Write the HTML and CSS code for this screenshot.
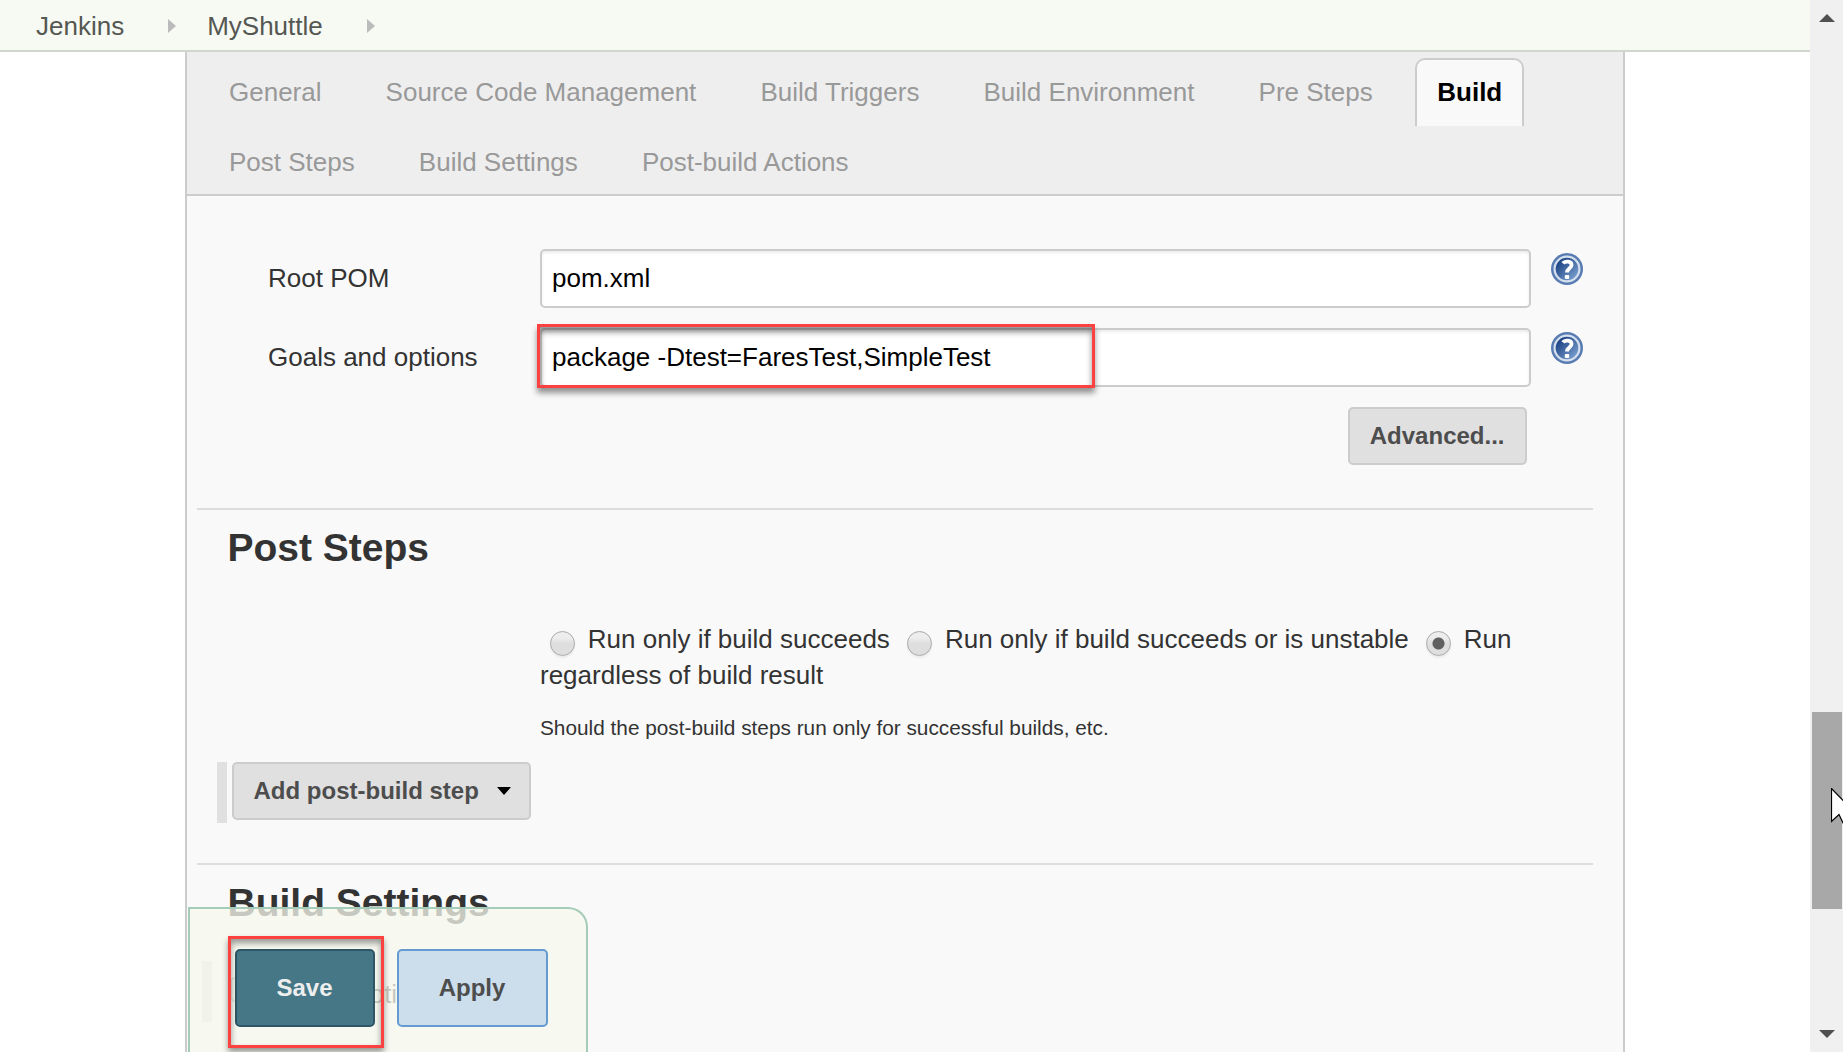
FILE: index.html
```html
<!DOCTYPE html>
<html lang="en">
<head>
<meta charset="utf-8">
<title>MyShuttle Config [Jenkins]</title>
<link rel="stylesheet" href="styles.css">
</head>
<body>
<svg class="defs" width="0" height="0">
  <defs>
    <linearGradient id="helpFill" x1="0" y1="0" x2="1" y2="1">
      <stop offset="0.1" stop-color="#12397b"/>
      <stop offset="0.9" stop-color="#7ea3d3"/>
    </linearGradient>
    <symbol id="help" viewBox="0 0 32 32">
      <circle cx="16" cy="16" r="16" fill="#587cb2"/>
      <circle cx="16" cy="16" r="12.4" fill="url(#helpFill)" stroke="#d5e0ef" stroke-width="2.2"/>
      <path d="M12 10.4C13.6 8 20.6 7.400 20.6 12C20.6 15.400 16 15 16 19.6" fill="none" stroke="#fff" stroke-width="3.8"/>
      <rect x="13.800" y="22" width="4.400" height="4" rx="1" fill="#fff"/>
    </symbol>
  </defs>
</svg>
<div class="page">
  <div class="content">
    <nav class="breadcrumbs">
      <span class="crumb">Jenkins</span>
      <svg class="crumb-arrow" viewBox="0 0 8 14"><path d="M0 0L8 7L0 14Z"/></svg>
      <span class="crumb">MyShuttle</span>
      <svg class="crumb-arrow" viewBox="0 0 8 14"><path d="M0 0L8 7L0 14Z"/></svg>
    </nav>
    <main class="panel">
      <div class="tabs">
        <span class="tab">General</span>
        <span class="tab">Source Code Management</span>
        <span class="tab">Build Triggers</span>
        <span class="tab">Build Environment</span>
        <span class="tab">Pre Steps</span>
        <span class="tab tab-active">Build</span>
        <span class="tab">Post Steps</span>
        <span class="tab">Build Settings</span>
        <span class="tab">Post-build Actions</span>
      </div>
      <section class="section build">
        <div class="row">
          <span class="label">Root POM</span>
          <div class="field">pom.xml</div>
          <svg class="help"><use href="#help"/></svg>
        </div>
        <div class="row">
          <span class="label">Goals and options</span>
          <div class="field">package -Dtest=FaresTest,SimpleTest<span class="mark mark-goals"></span></div>
          <svg class="help"><use href="#help"/></svg>
        </div>
        <div class="actions"><span class="button">Advanced...</span></div>
      </section>
      <section class="section post-steps">
        <h2 class="heading">Post Steps</h2>
        <div class="options">
          <p class="radios"><i class="radio"></i>Run only if build succeeds <i class="radio"></i>Run only if build succeeds or is unstable <i class="radio radio-on"></i>Run<br>regardless of build result</p>
          <p class="hint">Should the post-build steps run only for successful builds, etc.</p>
        </div>
        <div class="adder">
          <i class="bar"></i>
          <span class="button">Add post-build step<svg class="caret" viewBox="0 0 14 8"><path d="M0 0H14L7 8Z"/></svg></span>
        </div>
      </section>
      <section class="section settings">
        <h2 class="heading">Build Settings</h2>
        <div class="email">
          <i class="bar"></i>
          <i class="checkbox"></i>
          <span>E-mail Notification</span>
        </div>
      </section>
      <div class="footer">
        <span class="big-button save">Save<span class="mark mark-save"></span></span>
        <span class="big-button apply">Apply</span>
      </div>
    </main>
  </div>
  <aside class="scrollbar">
    <svg class="scroll-arrow" viewBox="0 0 16 8"><path d="M8 0L16 8H0Z"/></svg>
    <div class="thumb"></div>
    <svg class="scroll-arrow" viewBox="0 0 16 8"><path d="M0 0H16L8 8Z"/></svg>
  </aside>
  <svg class="cursor" viewBox="0 0 24 38"><path d="M.5.5V33.5L8 26.5L13 37L18 35L13.500 25H24Z" fill="#fff" stroke="#000" stroke-width="1.2"/></svg>
</div>
</body>
</html>
```

FILE: styles.css
```css
* { box-sizing: border-box; }
body {
  margin: 0;
  overflow: hidden;
  background: #fff;
  color: #333;
  font: 26px/36px "Liberation Sans", Arial, sans-serif;
}
.defs { position: absolute; }
.page { position: relative; display: flex; width: 1843px; height: 1052px; overflow: hidden; }
.content { display: flex; flex-direction: column; width: 1810px; }

.breadcrumbs {
  display: flex;
  align-items: center;
  height: 52px;
  flex: none;
  padding: 2px 0 0 36px;
  background: #f6faf2;
  border-bottom: 2px solid #d3d6cf;
  color: #555753;
}
.crumb-arrow { width: 8px; height: 14px; margin: 0 31px 0 44px; fill: #bbb; }

.panel {
  position: relative;
  flex: 1;
  width: 1440px;
  margin-left: 185px;
  background: #f9f9f9;
  border: solid #ccc;
  border-width: 0 2px;
}
.tabs {
  display: flex;
  flex-wrap: wrap;
  align-content: flex-start;
  gap: 2px 20.1px;
  height: 144px;
  padding: 6px 20px 0;
  background: #eee;
  border-bottom: 2px solid #ccc;
  color: #999;
}
.tab { height: 68px; padding: 0 22px; line-height: 69px; }
.tab-active {
  margin-left: 0.4px;
  padding: 0 20px;
  line-height: 65px;
  background: #f9f9f9;
  border: 2px solid #ccc;
  border-bottom: 0;
  border-radius: 10px 10px 0 0;
  color: #000;
  font-weight: bold;
}

.section { margin: 0 30px 0 10px; }
.build { height: 312px; padding-top: 53px; }
.row { display: flex; height: 79px; }
.label { width: 272px; margin-left: 71px; line-height: 58px; }
.field {
  position: relative;
  width: 991px;
  height: 59px;
  padding-left: 10px;
  background: #fff;
  border: 2px solid #ccc;
  border-radius: 5px;
  box-shadow: inset 0 2px 3px rgba(0, 0, 0, .08);
  color: #000;
  line-height: 54px;
}
.help { width: 32px; height: 32px; margin: 4px 0 0 20px; }
.mark { position: absolute; border: 3px solid #fd4141; }
.mark-goals {
  left: -5px;
  top: -6px;
  width: 558px;
  height: 64px;
  box-shadow: 0 5px 6px rgba(0, 0, 0, .42), inset 0 5px 6px rgba(0, 0, 0, .42);
}
.actions { display: flex; justify-content: flex-end; padding-right: 66px; }
.button {
  display: flex;
  height: 58px;
  padding: 0 20.5px 0 19.5px;
  background: #e0e0e0;
  border: 2px solid #ccc;
  border-radius: 5px;
  color: #4d4d4d;
  font-size: 24px;
  font-weight: bold;
  line-height: 54px;
}

.post-steps { height: 355px; border-top: 2px solid #ddd; }
.heading { margin: 0 0 0 30.5px; padding-top: 14px; font-size: 39px; line-height: 48px; color: #333; }
.options { margin-left: 343px; padding-top: 49px; }
.radios { margin: 0; white-space: nowrap; }
.radio {
  display: inline-block;
  width: 25px;
  height: 25px;
  margin: 0 12.8px 0 10px;
  border: 1.5px solid #aaa;
  border-radius: 50%;
  background: linear-gradient(#ededed 25%, #dedede 50%);
  box-shadow: 0 2px 2px rgba(0, 0, 0, .06);
  vertical-align: -8px;
}
.radio-on { background: radial-gradient(circle, #606060 5.500px, transparent 6.500px), linear-gradient(#ededed 25%, #dedede 50%); }
.hint { margin: 17px 0 0; font-size: 20.800px; line-height: 36px; }
.adder { display: flex; gap: 5px; margin: 16px 0 0 20px; }
.adder .button { padding-right: 18px; }
.bar { width: 10px; height: 61px; background: #e0e0e0; }
.caret { width: 14px; height: 8px; margin: 23px 0 0 18.5px; fill: #000; }

.settings { border-top: 2px solid #ddd; }
.email { display: flex; margin: 34px 0 0 5px; line-height: 66px; }
.checkbox {
  width: 25px;
  height: 25px;
  margin: 16px 15px 0 18px;
  border: 2px solid #aaa;
  border-radius: 5px;
  background: #e6e6e6;
}

.footer {
  position: absolute;
  left: 1px;
  bottom: 0;
  display: flex;
  gap: 22px;
  width: 400px;
  height: 145px;
  padding: 40px 0 0 45px;
  background: rgba(246, 248, 236, .76);
  border: solid #a5ccb8;
  border-width: 2px 2px 0;
  border-radius: 0 20px 0 0;
}
.big-button {
  position: relative;
  height: 78px;
  border: 2px solid;
  border-radius: 5px;
  font-size: 24px;
  font-weight: bold;
  line-height: 74px;
  text-align: center;
}
.save { width: 140px; padding-right: 1px; background: #457786; border-color: #2f5666; color: #eee; }
.apply { width: 151px; padding-right: 1px; background: #ccddec; border-color: #659bd1; color: #4d4d4d; }
.mark-save {
  left: -9px;
  top: -15px;
  width: 156px;
  height: 112px;
  box-shadow: 0 4px 6px rgba(0, 0, 0, .4), inset 0 4px 6px rgba(0, 0, 0, .4);
}

.scrollbar {
  display: flex;
  flex-direction: column;
  align-items: center;
  width: 33px;
  padding: 14px 0;
  background: #f0f0f0;
}
.scroll-arrow { width: 16px; height: 8px; fill: #505050; }
.thumb { width: 30px; height: 197px; margin: 690px 0 121px; background: #a8a8a8; }
.cursor { position: absolute; left: 1831px; top: 788px; width: 24px; height: 38px; }
```
